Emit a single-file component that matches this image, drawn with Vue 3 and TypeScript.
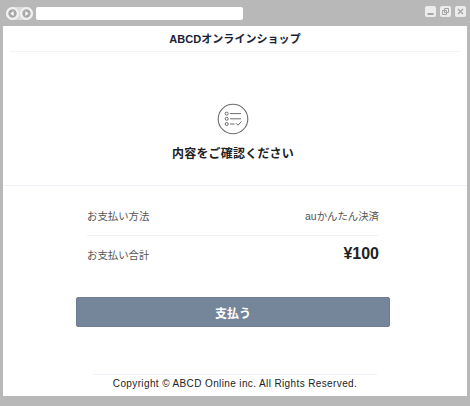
<script setup lang="ts">
const rows = [
  { label: 'お支払い方法', value: 'auかんたん決済', total: false },
  { label: 'お支払い合計', value: '¥100', total: true },
]
</script>

<template>
  <div class="window">
    <div class="chrome">
      <div class="nav">
        <span class="nav-btn"><svg viewBox="0 0 13 13" width="13" height="13"><circle cx="6.5" cy="6.5" r="4.2" fill="#a8a8a8" /><path d="M7.6 4 4.4 6.5l3.2 2.5z" fill="#fff" /></svg></span>
        <span class="nav-btn"><svg viewBox="0 0 13 13" width="13" height="13"><circle cx="6.5" cy="6.5" r="4.2" fill="#a8a8a8" /><path d="M5.4 4l3.2 2.5L5.4 9z" fill="#fff" /></svg></span>
      </div>
      <div class="address"></div>
      <div class="controls">
        <span class="ctl"><svg viewBox="0 0 11 11" width="11" height="11"><path d="M2.5 8h6" stroke="#8c8c8c" stroke-width="1.5" /></svg></span>
        <span class="ctl"><svg viewBox="0 0 11 11" width="11" height="11"><path d="M4.5 2.5h4v4h-4zM2.5 4.5h4v4h-4z" fill="none" stroke="#a4a4a4" /></svg></span>
        <span class="ctl"><svg viewBox="0 0 11 11" width="11" height="11"><path d="M3 3l5 5M8 3l-5 5" stroke="#a4a4a4" stroke-width="1.3" /></svg></span>
      </div>
    </div>
    <main class="page">
      <header class="shop">ABCDオンラインショップ</header>
      <section class="confirm">
        <svg class="icon" viewBox="0 0 32 32" width="32" height="32">
          <circle cx="16" cy="16" r="14.8" fill="none" stroke="#6e6e6e" stroke-width="1.1" />
          <g fill="none" stroke="#5c5c5c" stroke-width="0.9">
            <circle cx="9.7" cy="10.6" r="1.5" />
            <circle cx="9.7" cy="15.8" r="1.5" />
            <circle cx="9.7" cy="21" r="1.5" />
            <path d="M13 10.6h11M13 15.8h11M13 21h4.5M19 20.2l2 2 3.4-3.6" />
          </g>
        </svg>
        <h1 class="title">内容をご確認ください</h1>
      </section>
      <section class="summary">
        <div v-for="row in rows" :key="row.label" class="row" :class="{ 'row-total': row.total }">
          <span class="label">{{ row.label }}</span>
          <span class="value">{{ row.value }}</span>
        </div>
      </section>
      <div class="action">
        <button class="pay" type="button">支払う</button>
      </div>
      <footer class="footer">Copyright © ABCD Online inc. All Rights Reserved.</footer>
    </main>
  </div>
</template>

<style scoped>
.window {
  width: 470px;
  height: 406px;
  box-sizing: border-box;
  background: #b8b8b8;
  padding: 0 3px 10px;
  display: flex;
  flex-direction: column;
  font-family: "Liberation Sans", "Noto Sans CJK JP", sans-serif;
}
.chrome {
  height: 26px;
  flex: none;
  display: flex;
  align-items: center;
  padding: 1px 0 0 3px;
  box-sizing: border-box;
}
.nav {
  width: 27px;
  height: 13px;
  background: #dcdcdc;
  border-radius: 7px;
  display: flex;
  align-items: center;
  flex: none;
}
.nav-btn {
  width: 13px;
  height: 13px;
  border-radius: 50%;
  background: #f2f2f2;
  display: block;
  margin-right: 1px;
}
.nav-btn svg { display: block; }
.address {
  width: 207px;
  height: 13px;
  margin-left: 3px;
  background: #fff;
  border-radius: 2px;
  flex: none;
}
.controls {
  margin-left: auto;
  display: flex;
  gap: 4px;
  padding-right: 1px;
  margin-top: -4px;
}
.ctl {
  width: 11px;
  height: 11px;
  background: #ececec;
  border-radius: 2px;
  display: block;
}
.ctl svg { display: block; }
.page {
  flex: 1;
  background: #fff;
  display: flex;
  flex-direction: column;
  min-height: 0;
}
.shop {
  margin: 0 7px;
  height: 25px;
  border-bottom: 1px solid #f1f3f8;
  text-align: center;
  font-size: 11px;
  letter-spacing: 0.05px;
  font-weight: 700;
  line-height: 26px;
  color: #1a2238;
}
.confirm {
  height: 134px;
  box-sizing: border-box;
  border-bottom: 1px solid #f0f2f7;
  display: flex;
  flex-direction: column;
  align-items: center;
  padding: 51px 4px 0 0;
}
.icon { display: block; }
.title {
  margin: 10px 0 0;
  font-size: 12px;
  letter-spacing: 0.2px;
  line-height: 18px;
  font-weight: 700;
  color: #222;
}
.summary {
  margin: 0 88px 0 84px;
}
.row {
  display: flex;
  justify-content: space-between;
  align-items: center;
  height: 50px;
  padding-top: 9px;
  box-sizing: border-box;
  border-bottom: 1px solid #f0f2f7;
  font-size: 10.4px;
  color: #555;
}
.row-total {
  border-bottom: 0;
  height: 37px;
  padding-top: 0;
}
.row-total .value {
  font-size: 16px;
  font-weight: 700;
  color: #222;
  margin-bottom: 1px;
}
.action {
  margin: 24px 77px 0 73px;
}
.pay {
  display: block;
  width: 100%;
  height: 30px;
  padding: 0;
  border: 1px solid #6b7c94;
  border-radius: 2px;
  background: #75859a;
  color: #fff;
  font-family: inherit;
  font-size: 12px;
  font-weight: 700;
}
.footer {
  margin: auto 90px 0;
  height: 22px;
  border-top: 1px solid #f1f3f8;
  box-sizing: border-box;
  text-align: center;
  font-size: 10px;
  letter-spacing: 0.38px;
  line-height: 18px;
  color: #222;
  white-space: nowrap;
}
</style>
